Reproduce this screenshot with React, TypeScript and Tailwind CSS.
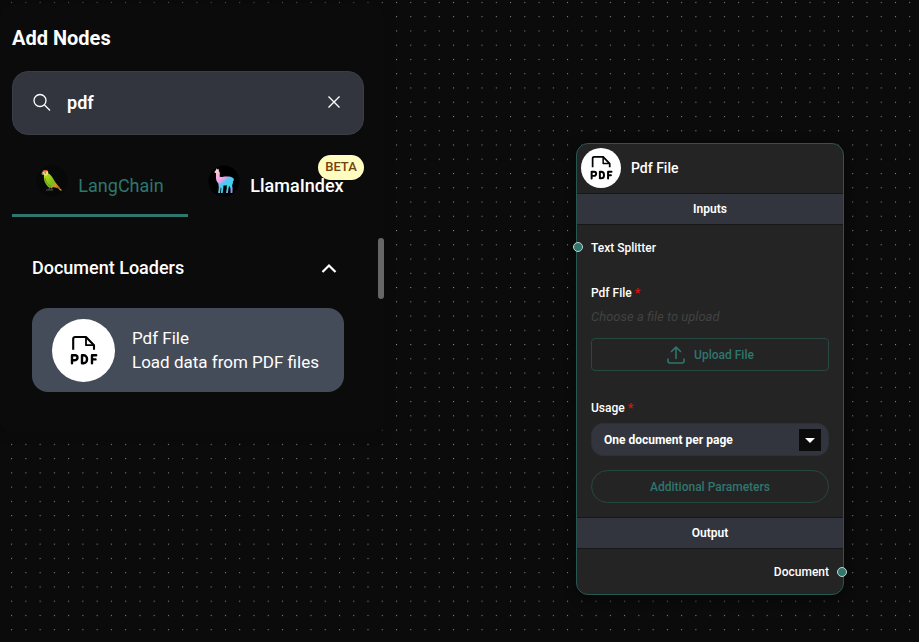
import type { ReactNode } from "react";

function DotGrid() {
  return (
    <svg className="absolute inset-0 h-full w-full" aria-hidden="true">
      <defs>
        <pattern id="dots" x="11.1" y="1.9" width="14.256" height="14.256" patternUnits="userSpaceOnUse">
          <circle cx="0.55" cy="0.55" r="0.55" fill="#a8a8a8" />
        </pattern>
      </defs>
      <rect width="100%" height="100%" fill="url(#dots)" />
    </svg>
  );
}

function PdfIcon({ className }: { className: string }) {
  return (
    <svg className={className} viewBox="0 0 28 30" fill="none" stroke="#000" strokeWidth="2.100" strokeLinejoin="round" aria-hidden="true">
      <path d="M3.200 14.700V4Q3.200 2 5.200 2H16l8 8.300v4.400" />
      <path d="M16 2v8.200h8" strokeWidth="1.800" />
      <g strokeWidth="2.400" strokeLinecap="round">
        <path d="M2 28.300V20.200h3a2.400 2.400 0 0 1 0 5H2.500" />
        <path d="M12 20.200v8h1.500a3.500 3.500 0 0 0 3.500-3.500v-1a3.500 3.500 0 0 0-3.500-3.500z" />
        <path d="M26.200 20.200h-4.200v8.100M22.500 24.400h3" />
      </g>
    </svg>
  );
}

function Parrot() {
  return (
    <svg className="size-8 shrink-0" viewBox="0 0 32 32" aria-hidden="true">
      <defs>
        <linearGradient id="wing" x1="8" y1="9" x2="24" y2="24" gradientUnits="userSpaceOnUse">
          <stop offset="0" stopColor="#c0e01d" />
          <stop offset="0.55" stopColor="#7dbb1c" />
          <stop offset="0.76" stopColor="#d9902a" />
          <stop offset="1" stopColor="#c43a20" />
        </linearGradient>
      </defs>
      <circle cx="16" cy="16" r="15.500" fill="#060908" />
      <path d="M10 25h7m-3.500-3-.5 3m2.500-3 .5 3" fill="none" stroke="#5c5a55" strokeWidth="0.900" />
      <path d="M8 10c-.6 5 1 9 5 12.500l3 .5 1-1 4 1 4 2c-.5-2-2-3.500-4-5.500-3-4-4-7-6.500-9.500C13 8.500 11.500 8 10 8z" fill="url(#wing)" />
      <path d="M9 13c.5 4 3 7 6 8.500" fill="none" stroke="#55961a" strokeWidth="1" />
      <path d="M6.300 9C6 6.500 7.500 5 9.500 5s3.200 1.500 2.700 3.500S9.500 11 8.500 10.300z" fill="#f4e07a" />
      <path d="M6.500 7c1-2.500 4-2.800 5.500-.7L9 6.500z" fill="#d84a20" />
      <path d="M5.500 8c1.500-.8 2.300.5 1.700 2.300C6 10 5.500 9.500 5.500 8z" fill="#8a857a" />
      <circle cx="9.200" cy="7.900" r="0.600" fill="#24221d" />
      <path d="m22.500 23 4 2.200-2.500.2z" fill="#9cc52c" />
    </svg>
  );
}

function Llama() {
  return (
    <svg className="size-8 shrink-0" viewBox="0 0 32 32" aria-hidden="true">
      <defs>
        <linearGradient id="wool" x1="7" y1="5" x2="23" y2="25" gradientUnits="userSpaceOnUse">
          <stop offset="0" stopColor="#f9e4d8" />
          <stop offset="0.2" stopColor="#fbb4dc" />
          <stop offset="0.45" stopColor="#f2a0ea" />
          <stop offset="0.6" stopColor="#5cc4ee" />
          <stop offset="0.85" stopColor="#35d6ee" />
          <stop offset="1" stopColor="#8f9df0" />
        </linearGradient>
      </defs>
      <circle cx="16" cy="16" r="15.500" fill="#000" />
      <path
        d="M8.500 3.200 9.600 4.400l1-.7.3 2.300.9 1.500-.1 4.300c2 .4 3.500-.3 6.500-.4 3 0 4.500-.2 6 1.100 1.300.3 2 1.600 1.500 3.200l-.7.400c.1 2-.4 3.200-.9 4.200l.5 3.200-.2 4.500h-1.700l-.3-5-1.300-2.300-.6 2.800-.6 4.500h-1.900l.8-5-.2-3c-1 .5-2 .6-3.200.5l-.2 3.300-.6 4.200h-1.700l.5-4.500-.6-1.200-.8 5.700h-1.900l.7-5-.4-4.500C8.500 16.800 7.600 14 8 10.800L8 8l-1.300-.3c-.3-1 .2-1.700 1.300-2.500z"
        fill="url(#wool)"
      />
    </svg>
  );
}

function Band({ children }: { children: ReactNode }) {
  return (
    <h3 className="flex h-8 items-center justify-center border-y border-[#171717] bg-[#32353d] font-semibold">
      {children}
    </h3>
  );
}

function Port({ className }: { className: string }) {
  return <span className={`absolute size-2.5 rounded-full border border-[#c5d5d2] bg-[#2f766d] ${className}`} />;
}

function AddNodesPanel() {
  return (
    <aside className="absolute top-1 left-0 w-96 rounded-xl bg-[#0b0b0b] px-3 pt-5 pb-10 shadow-[0_2px_8px_2px_#0a0a0a]">
      <h1 className="text-xl leading-7 font-bold">Add Nodes</h1>
      <div className="mt-[19px] mr-2 flex h-16 items-center rounded-2xl border border-[#3b3e45] bg-[#32353d] px-[19px]">
        <svg className="size-5 shrink-0" viewBox="0 0 20 20" fill="none" stroke="currentColor" strokeWidth="1.300" aria-hidden="true">
          <circle cx="8" cy="7.500" r="6" />
          <path d="m12.500 12 5.500 5.500" />
        </svg>
        <input
          aria-label="Search nodes"
          defaultValue="pdf"
          className="ml-[15px] min-w-0 flex-1 bg-transparent text-lg font-semibold outline-none"
        />
        <button type="button" aria-label="Clear search" className="flex size-5 items-center justify-center">
          <svg className="size-4" viewBox="0 0 16 16" fill="none" stroke="currentColor" strokeWidth="1.400" aria-hidden="true">
            <path d="m2.500 1.500 11 11m0-11-11 11" />
          </svg>
        </button>
      </div>
      <div role="tablist" className="mt-4 mr-2 grid grid-cols-2 text-lg font-medium">
        <button
          type="button"
          role="tab"
          aria-selected="true"
          className="flex h-[66px] items-center justify-center gap-2.5 border-b-3 border-[#2f766d] pb-1 text-[#2f766d]"
        >
          <Parrot />
          <span className="pt-2.5 font-normal">LangChain</span>
        </button>
        <button
          type="button"
          role="tab"
          aria-selected="false"
          className="relative flex h-[66px] items-center justify-center gap-2.5 border-b-3 border-transparent pb-1"
        >
          <Llama />
          <span className="pt-2.5">LlamaIndex</span>
          <span className="absolute top-1 right-0 flex h-[25px] w-[46px] items-center justify-center rounded-full bg-[#fefcbf] text-[13px] font-medium text-[#744210]">
            BETA
          </span>
        </button>
      </div>
      <section className="mr-7 ml-5 pt-[35px]">
        <button type="button" aria-expanded="true" className="flex h-8 w-full items-center justify-between text-lg font-medium">
          Document Loaders
          <svg className="mr-[7px] size-4" viewBox="0 0 16 16" fill="none" stroke="currentColor" strokeWidth="2.200" aria-hidden="true">
            <path d="m1.500 12 6.500-6.500 6.500 6.500" />
          </svg>
        </button>
        <button type="button" className="mt-6 flex h-[84px] w-full items-center rounded-2xl bg-[#454c59] px-5 text-left text-[17px] leading-6">
          <span className="flex size-[63px] shrink-0 items-center justify-center rounded-full bg-white">
            <PdfIcon className="h-[30px] w-7" />
          </span>
          <span className="ml-[17px] whitespace-nowrap">
            Pdf File
            <br />
            Load data from PDF files
          </span>
        </button>
      </section>
      <span className="absolute top-[234px] right-0 h-[61px] w-1.5 rounded-full bg-[#666]" />
    </aside>
  );
}

function PdfNode() {
  return (
    <article className="absolute top-[143px] left-[576px] w-[268px] rounded-xl border border-[#275750] bg-[#242424] text-xs leading-5 font-medium shadow-[0_2px_10px_2px_#080808]">
      <header className="flex h-[49px] items-center gap-2.5 pb-0.5 pl-1 text-sm">
        <span className="flex size-10 items-center justify-center rounded-full bg-white">
          <PdfIcon className="h-[25px] w-[23px]" />
        </span>
        <h2>Pdf File</h2>
      </header>
      <Band>Inputs</Band>
      <div className="relative px-3.5 pt-[13px]">
        <p>Text Splitter</p>
        <Port className="top-[17px] -left-1" />
      </div>
      <div className="px-3.5 pt-[25px] pb-3.5">
        <label htmlFor="upload" className="block">
          Pdf File <span className="font-bold text-[#e01010]">*</span>
        </label>
        <p className="mt-1 text-[13px] leading-5 font-normal text-[#424242] italic">Choose a file to upload</p>
        <button
          id="upload"
          type="button"
          className="mt-[11px] flex h-[33px] w-full items-center justify-center gap-2 rounded border border-[#274741] text-[#2f766d]"
        >
          <svg className="size-5" viewBox="0 0 20 20" fill="none" stroke="currentColor" strokeWidth="1.600" strokeLinecap="round" strokeLinejoin="round" aria-hidden="true">
            <path d="M2 14v2a2 2 0 0 0 2 2h12a2 2 0 0 0 2-2v-2M10 13.500V2M5.500 6.500 10 2l4.500 4.500" />
          </svg>
          Upload File
        </button>
        <label htmlFor="usage" className="mt-[27px] block">
          Usage <span className="font-bold text-[#e01010]">*</span>
        </label>
        <div className="relative mt-[5px]">
          <select
            id="usage"
            className="h-[33px] w-full appearance-none rounded-xl border border-[#2d3036] bg-[#32353d] px-3 font-bold outline-none"
          >
            <option>One document per page</option>
            <option>One document per file</option>
          </select>
          <span className="pointer-events-none absolute top-1.5 right-2 flex size-[22px] items-center justify-center bg-[#0b0b0b]">
            <span className="border-x-5 border-t-5 border-x-transparent border-t-white" />
          </span>
        </div>
        <button type="button" className="mt-3.5 h-[33px] w-full rounded-full border border-[#274741] text-[#2f766d]">
          Additional Parameters
        </button>
      </div>
      <Band>Output</Band>
      <div className="relative px-3.5 pt-[13px] pb-3 text-right">
        <p>Document</p>
        <Port className="top-[18px] -right-1" />
      </div>
    </article>
  );
}

export default function App() {
  return (
    <main className="relative min-h-screen overflow-hidden bg-[#0b0b0b] font-[Roboto,sans-serif] text-white">
      <DotGrid />
      <AddNodesPanel />
      <PdfNode />
    </main>
  );
}
